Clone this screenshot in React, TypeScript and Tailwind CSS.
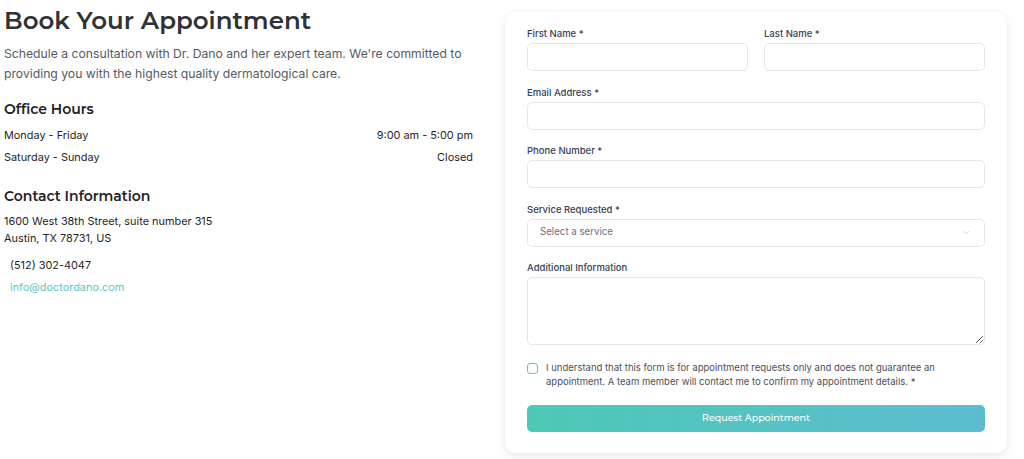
import { ChevronDown } from 'lucide-react'

const heading = "font-['Montserrat','Inter',sans-serif]"
const body = "font-['Inter','Liberation_Sans',sans-serif]"

const Field = ({ label, children }: { label: string; children: React.ReactNode }) => (
  <div className="flex flex-col gap-[3px]">
    <label className="text-[9.5px] font-medium leading-[13px] text-[#374151]">{label}</label>
    {children}
  </div>
)

const inputCls =
  'h-[28px] w-full rounded-[5px] border border-[#e5e7eb] bg-white px-3 text-[9.7px] outline-none'

export default function App() {
  return (
    <div className={`${body} flex gap-[32px] bg-white pl-[4px] pr-[17px] pt-[5px] h-[459px] overflow-hidden`}>
      {/* left */}
      <div className="w-[469px] shrink-0">
        <h1 className={`${heading} text-[24.5px] font-semibold leading-[30px] text-[#2f3237]`}>
          Book Your Appointment
        </h1>
        <p className="mt-[9px] text-[12.2px] leading-[19.5px] text-[#555a61]">
          Schedule a consultation with Dr. Dano and her expert team. We're committed to providing you with the highest quality dermatological care.
        </p>

        <h2 className={`${heading} mt-[16px] text-[14px] font-semibold leading-[20px] text-[#1f2125]`}>Office Hours</h2>
        <div className="mt-[5px] flex flex-col text-[10.9px] leading-[22px] text-[#1f1f1f]">
          <div className="flex justify-between">
            <span>Monday - Friday</span>
            <span>9:00 am - 5:00 pm</span>
          </div>
          <div className="flex justify-between">
            <span>Saturday - Sunday</span>
            <span>Closed</span>
          </div>
        </div>

        <h2 className={`${heading} mt-[18px] text-[14px] font-semibold leading-[20px] text-[#1f2125]`}>Contact Information</h2>
        <div className="mt-[7px] text-[10.9px] leading-[17px] text-[#1f1f1f]">
          <div>1600 West 38th Street, suite number 315</div>
          <div>Austin, TX 78731, US</div>
        </div>
        <div className="mt-[7px] pl-[6px] text-[10.9px] leading-[22px]">
          <div className="text-[#1f1f1f]">(512) 302-4047</div>
          <div className="text-[#5cc9c1]">info@doctordano.com</div>
        </div>
      </div>

      {/* form card */}
      <div className="mt-[7px] h-[441px] flex-1 rounded-[10px] bg-white px-[22px] pt-[15px] shadow-[0_4px_10px_rgba(0,0,0,0.08),0_0_3px_rgba(0,0,0,0.05)]">
        <div className="flex flex-col gap-[14.5px]">
          <div className="grid grid-cols-2 gap-[16px]">
            <Field label="First Name *">
              <input className={inputCls} />
            </Field>
            <Field label="Last Name *">
              <input className={inputCls} />
            </Field>
          </div>
          <Field label="Email Address *">
            <input className={inputCls} />
          </Field>
          <Field label="Phone Number *">
            <input className={inputCls} />
          </Field>
          <Field label="Service Requested *">
            <div className={`${inputCls} flex items-center justify-between text-[#6b7280]`}>
              <span>Select a service</span>
              <ChevronDown size={11} strokeWidth={1.5} className="text-[#b8bcc2]" />
            </div>
          </Field>
          <Field label="Additional Information">
            <textarea className="h-[68px] w-full resize-y rounded-[5px] border border-[#e5e7eb] bg-white px-3 py-2 text-[9.7px] outline-none" />
          </Field>
        </div>

        <div className="mt-[16px] flex gap-[8px]">
          <div className="mt-[2px] h-[11px] w-[11px] shrink-0 rounded-[3px] border border-[#5cc9c1]" />
          <p className="text-[9.5px] leading-[14px] text-[#4b5058]">
            I understand that this form is for appointment requests only and does not guarantee an appointment. A team member will contact me to confirm my appointment details. *
          </p>
        </div>

        <button
          className={`${heading} mt-[16px] h-[27px] w-full rounded-[5px] bg-gradient-to-r from-[#4dc8b6] to-[#5cbccf] text-[9.5px] font-medium text-white`}
        >
          Request Appointment
        </button>
      </div>
    </div>
  )
}
